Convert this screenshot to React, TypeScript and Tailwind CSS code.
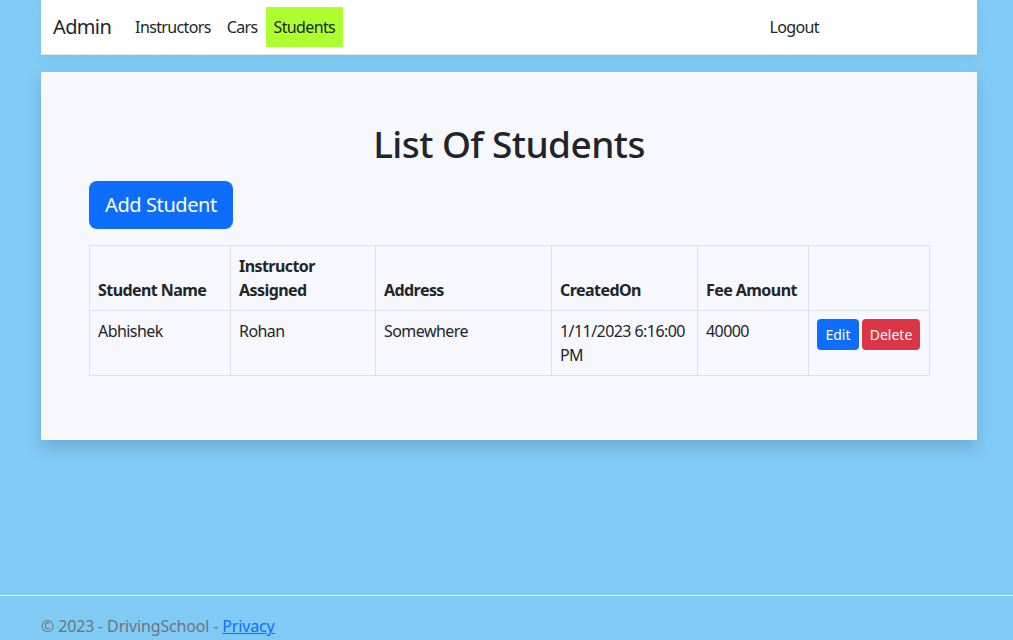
import React from "react";

const font = { fontFamily: '"Noto Sans", "Open Sans", sans-serif' };

export default function App() {
  return (
    <div
      className="h-[655px] flex flex-col bg-[#80cbf6] text-[#212529] text-[16px] leading-[24px] overflow-hidden tracking-[-0.035em]"
      style={font}
    >
      <header className="pl-[41px] pr-[36px]">
        <nav className="bg-white h-[55px] border-b border-[#dee2e6] shadow-[0_0.25rem_0.75rem_rgba(0,0,0,0.05)] flex items-center px-[12px] tracking-[-0.04em]">
          <span className="text-[20px] leading-[30px] mr-[16px] text-[#212529]">Admin</span>
          <a className="px-[8px] py-[8px] text-[#212529]">Instructors</a>
          <a className="px-[8px] py-[8px] text-[#212529]">Cars</a>
          <a className="px-[8px] py-[8px] text-[#212529] bg-[#adff2f]">Students</a>
          <a className="ml-auto mr-[138px] px-[8px] py-[8px] text-[#212529]">Logout</a>
        </nav>
      </header>

      <main className="pl-[41px] pr-[36px] mt-[17px]">
        <div className="bg-[#f7f8fd] shadow-[0_0.5rem_1rem_rgba(0,0,0,0.15)] p-[48px]">
          <h1 className="text-center text-[37px] leading-[44px] font-medium mb-[15px] mt-[2px]">
            List Of Students
          </h1>
          <button className="bg-[#0d6efd] text-white text-[20px] leading-[30px] px-[16px] py-[9px] rounded-[8px] mb-[16px] tracking-[-0.02em]">
            Add Student
          </button>
          <table className="w-[840px] border-collapse table-fixed mb-[16px]">
            <colgroup>
              <col className="w-[141px]" />
              <col className="w-[145px]" />
              <col className="w-[176px]" />
              <col className="w-[146px]" />
              <col className="w-[111px]" />
              <col className="w-[121px]" />
            </colgroup>
            <thead>
              <tr>
                <th className="border border-[#dee2e6] px-[8px] py-[8px] text-left align-bottom font-bold whitespace-nowrap">
                  Student Name
                </th>
                <th className="border border-[#dee2e6] px-[8px] py-[8px] text-left align-bottom font-bold">
                  Instructor
                  <br />
                  Assigned
                </th>
                <th className="border border-[#dee2e6] px-[8px] py-[8px] text-left align-bottom font-bold">
                  Address
                </th>
                <th className="border border-[#dee2e6] px-[8px] py-[8px] text-left align-bottom font-bold">
                  CreatedOn
                </th>
                <th className="border border-[#dee2e6] px-[8px] py-[8px] text-left align-bottom font-bold whitespace-nowrap">
                  Fee Amount
                </th>
                <th className="border border-[#dee2e6] px-[8px] py-[8px] text-left align-bottom font-bold"></th>
              </tr>
            </thead>
            <tbody>
              <tr>
                <td className="border border-[#dee2e6] px-[8px] py-[8px] align-top">Abhishek</td>
                <td className="border border-[#dee2e6] px-[8px] py-[8px] align-top">Rohan</td>
                <td className="border border-[#dee2e6] px-[8px] py-[8px] align-top">Somewhere</td>
                <td className="border border-[#dee2e6] px-[8px] py-[8px] align-top whitespace-nowrap">
                  1/11/2023 6:16:00
                  <br />
                  PM
                </td>
                <td className="border border-[#dee2e6] px-[8px] py-[8px] align-top">40000</td>
                <td className="border border-[#dee2e6] px-[8px] py-[8px] align-top">
                  <div className="flex gap-[3px] tracking-normal">
                    <button className="bg-[#0d6efd] text-white text-[14px] leading-[21px] w-[42px] py-[5px] rounded-[4px]">
                      Edit
                    </button>
                    <button className="bg-[#dc3545] text-white text-[14px] leading-[21px] w-[58px] py-[5px] rounded-[4px]">
                      Delete
                    </button>
                  </div>
                </td>
              </tr>
            </tbody>
          </table>
        </div>
      </main>

      <footer className="mt-auto h-[60px] border-t border-[#e3f1fb] leading-[60px] px-[41px] text-[#6c757d] whitespace-nowrap tracking-[-0.01em]">
        © 2023 - DrivingSchool - <a className="text-[#0d6efd] underline">Privacy</a>
      </footer>
    </div>
  );
}
